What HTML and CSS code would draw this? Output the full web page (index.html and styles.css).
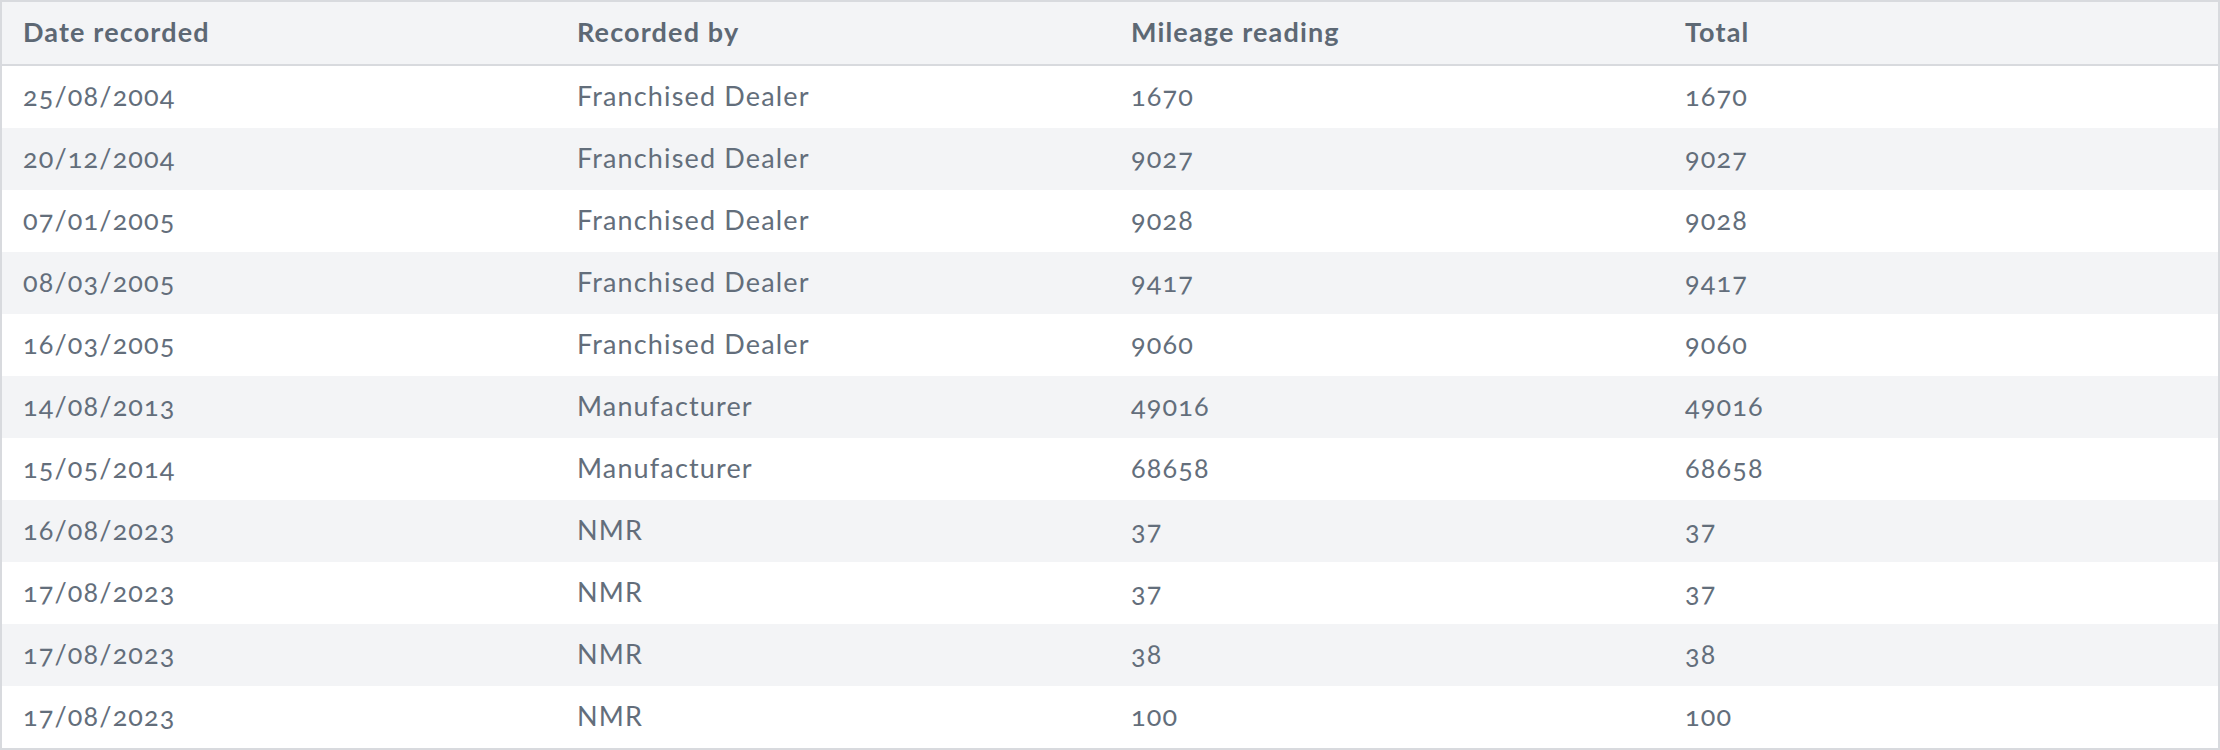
FILE: index.html
```html
<!DOCTYPE html>
<html lang="en">
<head>
<meta charset="utf-8">
<title>Mileage history</title>
<link rel="stylesheet" href="styles.css">
</head>
<body>
<table class="mileage">
  <thead>
    <tr><th>Date recorded</th><th>Recorded by</th><th>Mileage reading</th><th>Total</th></tr>
  </thead>
  <tbody>
    <tr><td>25/08/2004</td><td>Franchised Dealer</td><td>1670</td><td>1670</td></tr>
    <tr><td>20/12/2004</td><td>Franchised Dealer</td><td>9027</td><td>9027</td></tr>
    <tr><td>07/01/2005</td><td>Franchised Dealer</td><td>9028</td><td>9028</td></tr>
    <tr><td>08/03/2005</td><td>Franchised Dealer</td><td>9417</td><td>9417</td></tr>
    <tr><td>16/03/2005</td><td>Franchised Dealer</td><td>9060</td><td>9060</td></tr>
    <tr><td>14/08/2013</td><td>Manufacturer</td><td>49016</td><td>49016</td></tr>
    <tr><td>15/05/2014</td><td>Manufacturer</td><td>68658</td><td>68658</td></tr>
    <tr><td>16/08/2023</td><td>NMR</td><td>37</td><td>37</td></tr>
    <tr><td>17/08/2023</td><td>NMR</td><td>37</td><td>37</td></tr>
    <tr><td>17/08/2023</td><td>NMR</td><td>38</td><td>38</td></tr>
    <tr><td>17/08/2023</td><td>NMR</td><td>100</td><td>100</td></tr>
  </tbody>
</table>
</body>
</html>
```
FILE: styles.css
```css
html, body {
  margin: 0;
  padding: 0;
  background: #ffffff;
}
.mileage {
  width: 2220px;
  border-collapse: separate;
  border-spacing: 0;
  table-layout: fixed;
  border: 2px solid #d8dade;
  font-family: Lato, "Open Sans", sans-serif;
  font-size: 27px;
  letter-spacing: 1.15px;
  color: #636e7b;
  font-variant-numeric: oldstyle-nums;
}
.mileage th,
.mileage td {
  height: 62px;
  box-sizing: border-box;
  padding: 0 0 3px 21px;
  text-align: left;
  vertical-align: middle;
  white-space: nowrap;
}
.mileage thead tr {
  background: #f3f4f6;
}
.mileage th {
  height: 64px;
  border-bottom: 2px solid #d8dade;
  font-weight: 700;
  color: #5d6874;
}
.mileage tbody tr:nth-child(even) {
  background: #f3f4f6;
}
```
